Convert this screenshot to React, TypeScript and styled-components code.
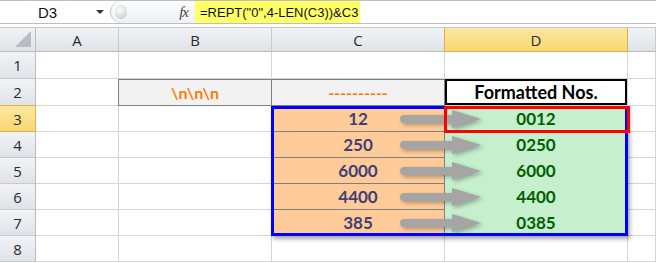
import React from 'react'
import styled, { createGlobalStyle, css } from 'styled-components'

const GlobalStyle = createGlobalStyle`
  html, body {
    margin: 0;
    padding: 0;
    background: #fff;
    overflow: hidden;
  }
  body {
    font-family: 'Liberation Sans', Arial, sans-serif;
  }
`

const COLS = [36, 83, 153, 173, 183, 28]
const ROWS = [27, 27, 26, 26, 26, 26, 26, 26]

const Page = styled.div`
  width: 656px;
  height: 263px;
  background: #fff;
  overflow: hidden;
`

const FormulaBar = styled.div`
  display: flex;
  height: 24px;
  border-top: 1px solid #b9bec6;
  border-bottom: 1px solid #b9bec6;
  box-sizing: border-box;
  background: #fff;
`

const NameBox = styled.div`
  width: 110px;
  display: flex;
  align-items: center;
  justify-content: space-between;
  padding: 0 6px 0 38px;
  box-sizing: border-box;
  font-size: 15px;
  color: #111;
`

const DropArrow = styled.span`
  width: 0;
  height: 0;
  border-left: 4px solid transparent;
  border-right: 4px solid transparent;
  border-top: 4px solid #333;
`

const FxBox = styled.div`
  width: 85px;
  display: flex;
  align-items: center;
  justify-content: space-between;
  padding: 0 7px 0 4px;
  box-sizing: border-box;
  border-left: 1px solid #c3c7cd;
  border-radius: 11px 0 0 11px;
  background: linear-gradient(#fdfdfd, #eef0f3);
`

const Knob = styled.span`
  width: 12px;
  height: 14px;
  border-radius: 50%;
  background: radial-gradient(circle at 40% 35%, #ffffff, #c9cdd3 80%);
`

const Fx = styled.span`
  font-family: 'Liberation Serif', 'Times New Roman', serif;
  font-style: italic;
  font-size: 15px;
  color: #444;
  letter-spacing: -1px;
`

const FormulaText = styled.div`
  flex: 1;
  display: flex;
  align-items: stretch;
`

const Highlight = styled.span`
  background: #ffff66;
  font-size: 13px;
  color: #111;
  padding: 0 2px 0 5px;
  display: flex;
  align-items: center;
  white-space: nowrap;
`

const Gap = styled.div`
  height: 3px;
  background: #fff;
`

const Sheet = styled.div`
  position: relative;
  display: grid;
  grid-template-columns: ${COLS.map((c) => c + 'px').join(' ')};
  grid-template-rows: 25px ${ROWS.map((r) => r + 'px').join(' ')};
`

const headerBase = css<{ $active?: boolean }>`
  box-sizing: border-box;
  display: flex;
  align-items: center;
  justify-content: center;
  font-family: 'Open Sans', 'Liberation Sans', sans-serif;
  font-size: 15px;
  color: #2b2b2b;
  background: ${(p) =>
    p.$active
      ? 'linear-gradient(#fbe7a0, #f9d86f)'
      : 'linear-gradient(#f1f3f6, #dfe3e8)'};
`

const ColHead = styled.div<{ $active?: boolean }>`
  ${headerBase};
  border-right: 1px solid ${(p) => (p.$active ? '#e3ad4d' : '#c5cad1')};
  border-bottom: 1px solid ${(p) => (p.$active ? '#e3ad4d' : '#b7bcc3')};
  border-top: 1px solid #c5cad1;
  ${(p) => p.$active && 'border-left: 1px solid #e3ad4d; margin-left: -1px;'}
`

const RowHead = styled.div<{ $active?: boolean }>`
  ${headerBase};
  border-right: 1px solid ${(p) => (p.$active ? '#e3ad4d' : '#b7bcc3')};
  border-bottom: 1px solid ${(p) => (p.$active ? '#e3ad4d' : '#c5cad1')};
  ${(p) => p.$active && 'border-top: 1px solid #e3ad4d; margin-top: -1px;'}
`

const Corner = styled.div`
  ${headerBase};
  border-right: 1px solid #b7bcc3;
  border-bottom: 1px solid #b7bcc3;
  border-top: 1px solid #c5cad1;
  position: relative;
  &::after {
    content: '';
    position: absolute;
    right: 4px;
    bottom: 4px;
    border-left: 16px solid transparent;
    border-bottom: 16px solid #b8bcc3;
  }
`

type Tone = 'plain' | 'calc' | 'title' | 'input' | 'good'

const tones: Record<Tone, ReturnType<typeof css>> = {
  plain: css``,
  calc: css`
    background: #f2f2f2;
    color: #fa7d00;
    border-top: 1px solid #7f7f7f;
    border-bottom: 1px solid #7f7f7f;
    border-right: 1px solid #7f7f7f;
  `,
  title: css`
    color: #000;
    box-shadow: inset 0 0 0 2px #000;
    font-size: 18px;
  `,
  input: css`
    background: #ffcc99;
    color: #3f3f76;
    border-bottom: 1px solid #7f7f7f;
    border-right: 1px solid #7f7f7f;
    font-size: 17px;
  `,
  good: css`
    background: #c6efce;
    color: #006100;
    border-bottom: 1px solid #c6efce;
    font-size: 17px;
  `,
}

const Cell = styled.div<{ $tone?: Tone; $leftEdge?: boolean }>`
  box-sizing: border-box;
  border-right: 1px solid #d4d4d4;
  border-bottom: 1px solid #d4d4d4;
  display: flex;
  align-items: center;
  justify-content: center;
  font-family: Lato, 'Open Sans', sans-serif;
  font-weight: 700;
  font-size: 16px;
  white-space: nowrap;
  ${(p) => tones[p.$tone ?? 'plain']};
  ${(p) => p.$leftEdge && 'border-left: 1px solid #7f7f7f; margin-left: -1px;'}
`

const Frame = styled.div<{ $color: string; $shadow?: boolean }>`
  position: absolute;
  box-sizing: border-box;
  border: 3px solid ${(p) => p.$color};
  pointer-events: none;
  ${(p) => p.$shadow && 'box-shadow: 2px 3px 4px rgba(0, 0, 0, 0.35);'}
`

const ArrowWrap = styled.svg`
  position: absolute;
  left: 398px;
  width: 86px;
  height: 22px;
  overflow: visible;
  filter: drop-shadow(2px 2px 2px rgba(0, 0, 0, 0.3));
`

const Arrow = ({ top }: { top: number }) => (
  <ArrowWrap style={{ top }} viewBox="0 0 86 22">
    <path
      d="M6 7 H54 V2 L83 11 L54 20 V15 H6 A4 4 0 0 1 6 7 Z"
      fill="#a5a5a5"
    />
  </ArrowWrap>
)

const cols = ['A', 'B', 'C', 'D']
const data = [
  ['12', '0012'],
  ['250', '0250'],
  ['6000', '6000'],
  ['4400', '4400'],
  ['385', '0385'],
]

export default function App() {
  const rowTops: number[] = []
  let y = 25
  ROWS.forEach((h) => {
    rowTops.push(y)
    y += h
  })

  return (
    <Page>
      <GlobalStyle />
      <FormulaBar>
        <NameBox>
          <span>D3</span>
          <DropArrow />
        </NameBox>
        <FxBox>
          <Knob />
          <Fx>fx</Fx>
        </FxBox>
        <FormulaText>
          <Highlight>=REPT("0",4-LEN(C3))&amp;C3</Highlight>
        </FormulaText>
      </FormulaBar>
      <Gap />
      <Sheet>
        <Corner />
        {cols.map((c) => (
          <ColHead key={c} $active={c === 'D'}>
            {c}
          </ColHead>
        ))}
        <ColHead />

        {ROWS.map((_, i) => {
          const r = i + 1
          const row = data[r - 3]
          return (
            <React.Fragment key={r}>
              <RowHead $active={r === 3}>{r}</RowHead>
              <Cell />
              {r === 2 ? (
                <>
                  <Cell $tone="calc" $leftEdge>
                    \n\n\n
                  </Cell>
                  <Cell $tone="calc">----------</Cell>
                  <Cell $tone="title">Formatted Nos.</Cell>
                </>
              ) : row ? (
                <>
                  <Cell />
                  <Cell $tone="input">{row[0]}</Cell>
                  <Cell $tone="good">{row[1]}</Cell>
                </>
              ) : (
                <>
                  <Cell />
                  <Cell />
                  <Cell />
                </>
              )}
              <Cell />
            </React.Fragment>
          )
        })}

        {data.map((_, i) => (
          <Arrow key={i} top={rowTops[i + 2] + 2} />
        ))}
        <Frame
          $color="#0000ff"
          $shadow
          style={{ left: 271, top: rowTops[2], width: 357, height: 130 }}
        />
        <Frame
          $color="#ff0000"
          style={{ left: 444, top: rowTops[2], width: 186, height: 27 }}
        />
      </Sheet>
    </Page>
  )
}
